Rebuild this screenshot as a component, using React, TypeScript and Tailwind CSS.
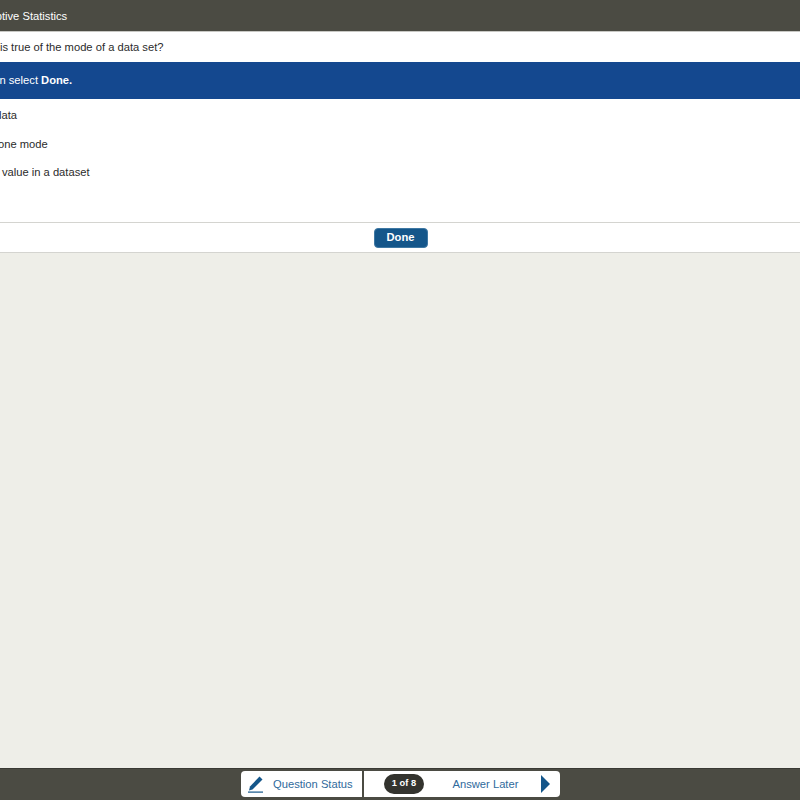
const options = [
  { text: "It is the middle value of the data", ml: "-ml-[141px]" },
  { text: "A data set can have only one mode", ml: "-ml-[127px]" },
  { text: "It is the most frequently occurring value in a dataset", ml: "-ml-[166px]" },
];

export default function App() {
  return (
    <div className="h-[800px] w-[800px] overflow-hidden bg-[#eeeee8] font-['Liberation_Sans',Arial,sans-serif] text-[11.2px] text-[#2b2b2b] flex flex-col">
      {/* Title bar */}
      <div className="h-8 shrink-0 bg-[#4b4b43] border-b border-[#c8c8c4] flex items-center pt-px text-white whitespace-nowrap">
        <span className="-ml-[36px]">Descriptive Statistics</span>
      </div>

      {/* Question */}
      <div className="h-[30px] shrink-0 bg-white flex items-center whitespace-nowrap">
        <span className="-ml-[112px]">Which of the following is true of the mode of a data set?</span>
      </div>

      {/* Instruction */}
      <div className="h-[37px] shrink-0 bg-[#14488f] flex items-center text-white whitespace-nowrap">
        <span className="-ml-[115px]">
          Choose an answer, then select <b>Done.</b>
        </span>
      </div>

      {/* Answer options */}
      <div className="h-[123px] shrink-0 bg-white pt-[8px] flex flex-col gap-[10.5px] whitespace-nowrap">
        {options.map((o) => (
          <div key={o.text} className={"h-[18px] leading-[16px] " + o.ml}>
            {o.text}
          </div>
        ))}
      </div>

      {/* Done bar */}
      <div className="h-[31px] shrink-0 bg-white border-y border-[#d4d4d0] flex items-center justify-center">
        <button className="ml-[1px] h-5 w-[54px] rounded-[4px] border border-[#3f78a3] bg-[#14568a] text-white font-bold">Done</button>
      </div>

      <div className="flex-1" />

      {/* Footer */}
      <div className="h-8 shrink-0 bg-[#4b4b43] border-t border-[#3a3a34] pb-px flex items-center justify-center">
        <div className="flex h-[26px] w-[319px] ml-[1px] text-[#2f6a9c]">
          <div className="w-[121px] bg-white rounded-l-[4px] flex items-center pl-[7px] gap-[9px]">
            <svg width="16" height="18" viewBox="0 0 16 18" fill="none">
              <path d="M2 11.5 11.5 1.5 14.5 4.5 4.5 14.5 1 15.5Z" fill="#14568a" />
              <rect x="0" y="16.5" width="15" height="1.2" fill="#14568a" />
            </svg>
            <span>Question Status</span>
          </div>
          <div className="w-[196.5px] ml-[1.5px] bg-white rounded-r-[4px] flex items-center pl-[20.5px]">
            <span className="h-5 w-10 rounded-full bg-[#33332e] text-white text-[9.3px] font-bold flex items-center justify-center">
              1 of 8
            </span>
            <span className="ml-[28.5px]">Answer Later</span>
            <svg className="ml-[23px]" width="9" height="18" viewBox="0 0 9 18">
              <path d="M0 0 9 9 0 18Z" fill="#14568a" />
            </svg>
          </div>
        </div>
      </div>
    </div>
  );
}
